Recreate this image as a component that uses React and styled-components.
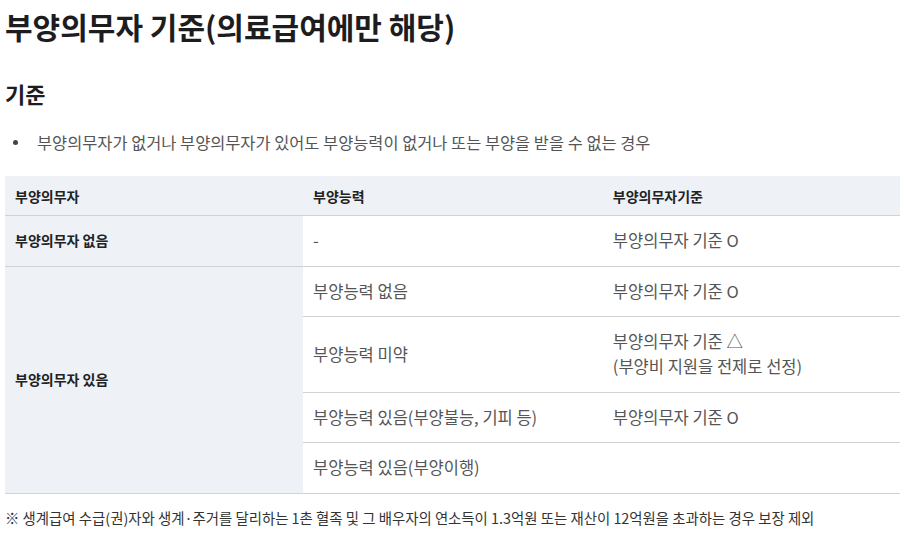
import React from 'react';
import styled, { createGlobalStyle } from 'styled-components';

const GlobalStyle = createGlobalStyle`
  body {
    margin: 0;
    background: #fff;
    font-family: "Noto Sans CJK KR", "Noto Sans", sans-serif;
  }
`;

const rows = [
  { label: '부양의무자 없음', span: 1, items: [{ ability: '-', rule: ['부양의무자 기준 O'] }] },
  {
    label: '부양의무자 있음',
    span: 4,
    items: [
      { ability: '부양능력 없음', rule: ['부양의무자 기준 O'] },
      { ability: '부양능력 미약', rule: ['부양의무자 기준 △', '(부양비 지원을 전제로 선정)'] },
      { ability: '부양능력 있음(부양불능, 기피 등)', rule: ['부양의무자 기준 O'] },
      { ability: '부양능력 있음(부양이행)', rule: [] },
    ],
  },
];

function App() {
  return (
    <>
      <GlobalStyle />
      <Page>
        <Title>부양의무자 기준(의료급여에만 해당)</Title>
        <SubTitle>기준</SubTitle>
        <Bullets>
          <li>부양의무자가 없거나 부양의무자가 있어도 부양능력이 없거나 또는 부양을 받을 수 없는 경우</li>
        </Bullets>
        <Table>
          <colgroup>
            <col style={{ width: '33.3%' }} />
            <col style={{ width: '33.5%' }} />
            <col />
          </colgroup>
          <thead>
            <tr>
              <Th>부양의무자</Th>
              <Th>부양능력</Th>
              <Th>부양의무자기준</Th>
            </tr>
          </thead>
          <tbody>
            {rows.map((group) =>
              group.items.map((item, i) => (
                <tr key={group.label + i}>
                  {i === 0 && <RowHead rowSpan={group.span}>{group.label}</RowHead>}
                  <Td>{item.ability}</Td>
                  <Td>
                    {item.rule.map((line) => (
                      <div key={line}>{line}</div>
                    ))}
                  </Td>
                </tr>
              ))
            )}
          </tbody>
        </Table>
        <Note>※ 생계급여 수급(권)자와 생계·주거를 달리하는 1촌 혈족 및 그 배우자의 연소득이 1.3억원 또는 재산이 12억원을 초과하는 경우 보장 제외</Note>
      </Page>
    </>
  );
}

export default App;

const Page = styled.div`
  padding: 6px 4px 0 5px;
`;

const Title = styled.h1`
  margin: 0;
  font-size: 30px;
  line-height: 40px;
  font-weight: 700;
  color: #1d1d1f;
`;

const SubTitle = styled.h2`
  margin: 32px 0 0;
  font-size: 22px;
  line-height: 30px;
  font-weight: 700;
  color: #1d1d1f;
`;

const Bullets = styled.ul`
  list-style: none;
  margin: 22px 0 0;
  padding: 0;

  li {
    position: relative;
    padding-left: 32px;
    font-size: 16.4px;
    line-height: 24px;
    color: #555;
  }

  li::before {
    content: '';
    position: absolute;
    left: 8px;
    top: 10px;
    width: 5px;
    height: 5px;
    border-radius: 50%;
    background: #444;
  }
`;

const Table = styled.table`
  width: 895px;
  margin-top: 22px;
  border-collapse: collapse;
  table-layout: fixed;
`;

const Th = styled.th`
  background: #eef1f6;
  text-align: left;
  font-size: 14px;
  font-weight: 700;
  line-height: 20px;
  color: #222;
  padding: 10px 10px 9px;
  border-bottom: 1px solid #cfd2d7;
`;

const RowHead = styled.th`
  background: #eef1f6;
  text-align: left;
  font-size: 14px;
  font-weight: 700;
  line-height: 25px;
  color: #222;
  padding: 12px 10px 12.5px;
  border-bottom: 1px solid #cfd2d7;
`;

const Td = styled.td`
  font-size: 16.5px;
  line-height: 25px;
  color: #555;
  padding: 12px 10px 12.5px;
  border-bottom: 1px solid #cfd2d7;
  vertical-align: middle;
`;

const Note = styled.p`
  margin: 14px 0 0;
  font-size: 14.4px;
  line-height: 20px;
  color: #333;
`;
